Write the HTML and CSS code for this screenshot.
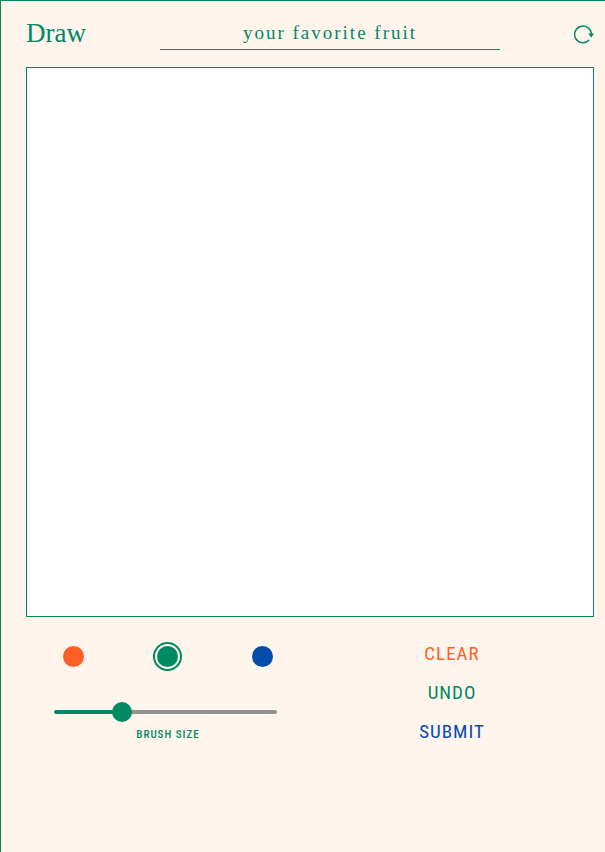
FILE: index.html
```html
<!DOCTYPE html>
<html lang="en">
<head>
<meta charset="utf-8">
<meta name="viewport" content="width=device-width, initial-scale=1">
<title>Draw</title>
<link rel="stylesheet" href="styles.css">
</head>
<body>
<main class="panel">
  <header class="header">
    <h1 class="title">Draw</h1>
    <p class="prompt">your favorite fruit</p>
    <button class="refresh" type="button" aria-label="New prompt">
      <svg viewBox="0 0 20 20" width="20" height="20" aria-hidden="true">
        <path d="M15.2 16.1A8.4 8.4 0 1 1 17.4 10" fill="none" stroke="currentColor" stroke-width="1.5"/>
        <path d="M14.2 9.6H20L17.2 13.6Z" fill="currentColor"/>
      </svg>
    </button>
  </header>
  <canvas class="board" width="566" height="548" aria-label="Drawing area"></canvas>
  <section class="controls">
    <div class="brush">
      <div class="colors">
        <button class="color orange" type="button" aria-label="Orange"></button>
        <button class="color green selected" type="button" aria-label="Green" aria-pressed="true"></button>
        <button class="color blue" type="button" aria-label="Blue"></button>
      </div>
      <div class="size">
        <input class="slider" id="brush-size" type="range" min="0" max="7" value="2">
        <label class="size-label" for="brush-size">BRUSH SIZE</label>
      </div>
    </div>
    <div class="actions">
      <button class="action orange-text" type="button">CLEAR</button>
      <button class="action" type="button">UNDO</button>
      <button class="action blue-text" type="button">SUBMIT</button>
    </div>
  </section>
</main>
</body>
</html>
```
FILE: styles.css
```css
:root {
  --green: #008a64;
  --orange: #ff5f26;
  --blue: #044cac;
  --cream: #fff5ec;
  --narrow: "Liberation Sans Narrow", "Roboto Condensed", "Open Sans Condensed", Roboto, sans-serif;
}

* {
  box-sizing: border-box;
}

body {
  margin: 0;
  background: var(--cream);
  color: var(--green);
}

button {
  padding: 0;
  border: 0;
  background: none;
  color: inherit;
}

.panel {
  min-height: 100vh;
  padding: 16px 11px 24px 25px;
  border-top: 1px solid var(--green);
  border-left: 1px solid var(--green);
}

.header {
  display: flex;
  align-items: center;
  justify-content: space-between;
  height: 34px;
  margin-bottom: 16px;
}

.title {
  margin: 0;
  font: 400 27px/30px "Liberation Serif", serif;
  padding-bottom: 2px;
}

.prompt {
  width: 60%;
  height: 32px;
  margin: 0;
  border-bottom: 1px solid var(--green);
  font: 400 19px/30px "Liberation Serif", serif;
  letter-spacing: 2px;
  text-align: center;
}

.refresh {
  width: 20px;
  height: 20px;
}

.refresh svg {
  display: block;
}

.board {
  display: block;
  width: 100%;
  aspect-ratio: 568 / 550;
  border: 1px solid var(--green);
  background: #fff;
}

.controls {
  display: grid;
  grid-template-columns: 1fr 1fr;
  padding-top: 17px;
}

.colors {
  display: grid;
  grid-template-columns: repeat(3, 1fr);
  justify-items: center;
  padding: 12px 0;
}

.color {
  width: 21px;
  height: 21px;
  border-radius: 50%;
}

.orange { background: var(--orange); }
.green { background: var(--green); }
.blue { background: var(--blue); }

.selected {
  box-shadow: 0 0 0 2px var(--cream), 0 0 0 4px var(--green);
}

.size {
  display: flex;
  flex-direction: column;
  padding: 23px 28px 0;
}

.slider {
  appearance: none;
  width: 98%;
  height: 20px;
  margin: 0;
  background: none;
}

.slider::-webkit-slider-runnable-track {
  height: 4px;
  border-radius: 2px;
  background: linear-gradient(to right, var(--green) 30%, #929292 30%);
}

.slider::-webkit-slider-thumb {
  appearance: none;
  width: 20px;
  height: 20px;
  margin-top: -8px;
  border-radius: 50%;
  background: var(--green);
}

.size-label {
  align-self: center;
  margin-top: 5px;
  font: 500 11px/16px var(--narrow);
  letter-spacing: 1px;
}

.actions {
  display: flex;
  flex-direction: column;
  align-items: center;
}

.action {
  font: 400 19px/39px var(--narrow);
  letter-spacing: 1px;
}

.orange-text { color: var(--orange); }
.blue-text { color: var(--blue); }
```
